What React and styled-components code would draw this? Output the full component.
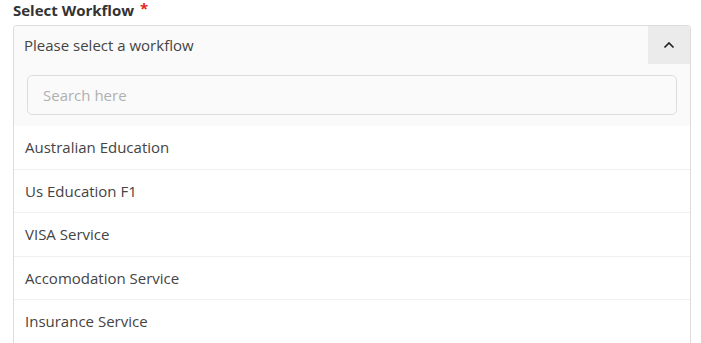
import styled, { createGlobalStyle } from "styled-components";

const GlobalStyle = createGlobalStyle`
  body {
    margin: 0;
    background: #ffffff;
    font-family: "Open Sans", "Liberation Sans", sans-serif;
  }
`;

const Wrapper = styled.div`
  padding: 0 10px 0 13px;
`;

const Label = styled.div`
  font-size: 15px;
  font-weight: 700;
  color: #333333;
  line-height: 20px;
  height: 25px;
  span {
    color: #e02424;
    font-size: 15px;
    line-height: 16px;
    display: inline-block;
    vertical-align: top;
    margin-top: 0px;
    margin-left: 6px;
  }
`;

const SelectBox = styled.div`
  border: 1px solid #dcdcdc;
  border-bottom: none;
  border-radius: 4px 4px 0 0;
  overflow: hidden;
  background: #ffffff;
`;

const Header = styled.div`
  display: flex;
  height: 38px;
  background: #fafafa;
  .placeholder {
    flex: 1;
    display: flex;
    align-items: center;
    padding-left: 10px;
    font-size: 15px;
    color: #444444;
  }
`;

const Toggle = styled.div`
  width: 42px;
  background: #ebebeb;
  display: flex;
  align-items: center;
  justify-content: center;
`;

const SearchPanel = styled.div`
  background: #fafafa;
  padding: 11px 13px;
  input {
    width: 100%;
    box-sizing: border-box;
    height: 40px;
    border: 1px solid #dddddd;
    border-radius: 5px;
    background: #fafafa;
    padding: 0 15px;
    font-family: "Open Sans", "Liberation Sans", sans-serif;
    font-size: 15px;
    outline: none;
    &::placeholder {
      color: #b0b0b0;
    }
  }
`;

const Option = styled.div`
  height: 43.5px;
  box-sizing: border-box;
  border-bottom: 1px solid #f0f0f0;
  display: flex;
  align-items: center;
  padding-left: 11px;
  font-size: 15px;
  color: #444444;
`;

const options = [
  "Australian Education",
  "Us Education F1",
  "VISA Service",
  "Accomodation Service",
  "Insurance Service",
];

export default function App() {
  return (
    <>
      <GlobalStyle />
      <Wrapper>
        <Label>
          Select Workflow<span>*</span>
        </Label>
        <SelectBox>
          <Header>
            <div className="placeholder">Please select a workflow</div>
            <Toggle>
              <svg width="12" height="8" viewBox="0 0 12 8">
                <polyline
                  points="1.5,6.5 6,2 10.5,6.5"
                  fill="none"
                  stroke="#222"
                  strokeWidth="1.7"
                />
              </svg>
            </Toggle>
          </Header>
          <SearchPanel>
            <input placeholder="Search here" />
          </SearchPanel>
          {options.map((opt, idx) => (
            <Option key={idx}>{opt}</Option>
          ))}
        </SelectBox>
      </Wrapper>
    </>
  );
}
